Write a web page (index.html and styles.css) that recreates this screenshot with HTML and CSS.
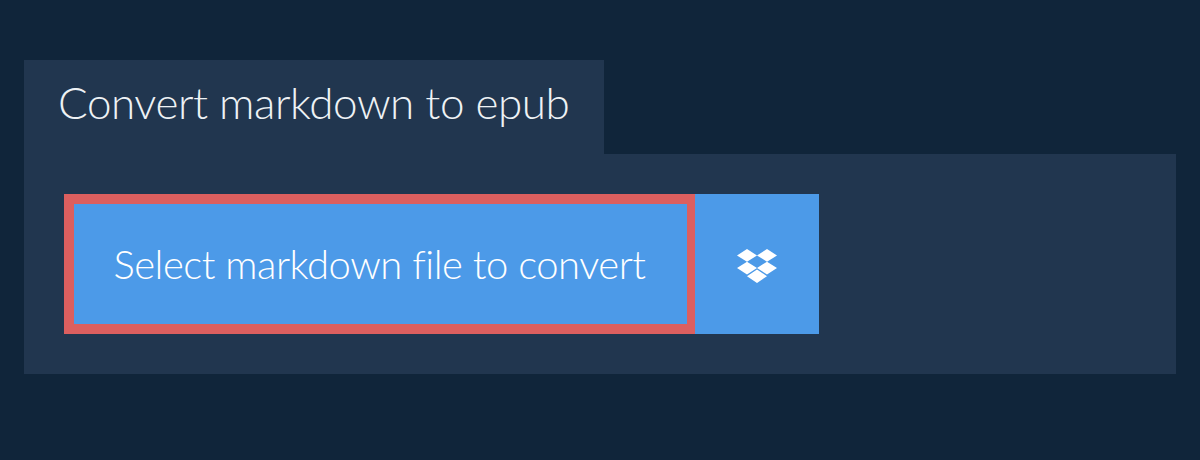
FILE: index.html
```html
<!DOCTYPE html>
<html lang="en">
<head>
  <meta charset="UTF-8" />
  <title>Convert markdown to epub</title>
  <link rel="stylesheet" href="styles.css">
</head>
<body>
  <h1 class="tab">Convert markdown to epub</h1>
  <div class="panel">
    <div class="actions">
      <button class="select-btn" type="button">Select markdown file to convert</button>
      <button class="dropbox-btn" type="button" aria-label="Dropbox">
        <svg class="dropbox-icon" viewBox="0 0 40 34" width="40" height="34">
          <path d="M10 0 20 6.4 10 12.700 0 6.4zM30 0 40 6.4 30 12.700 20 6.4zM0 19 10 12.700 20 19 10 25.400zM30 12.700 40 19 30 25.400 20 19zM20 20.500 30 27.200 20 34 10 27.200z" />
        </svg>
      </button>
    </div>
  </div>
</body>
</html>
```

FILE: styles.css
```css
body {
  margin: 0;
  padding: 60px 24px 0;
  background: #10253a;
  font-family: Lato, sans-serif;
  font-weight: 300;
}
.tab {
  display: table;
  margin: 0;
  padding: 16px 35px 26px 34px;
  background: #21364f;
  color: #eef2f5;
  font-size: 44px;
  font-weight: 300;
  line-height: 52px;
  letter-spacing: -0.45px;
}
.panel {
  background: #21364f;
  padding: 40px;
}
.actions {
  display: flex;
}
.select-btn {
  width: 631px;
  height: 140px;
  box-sizing: border-box;
  border: 10px solid #dc5f5f;
  border-right-width: 8px;
  background: #4c9ae8;
  color: #fff;
  font-family: inherit;
  font-size: 40px;
  font-weight: 300;
  letter-spacing: -0.48px;
  padding: 0 2px 0 0;
}
.dropbox-btn {
  width: 124px;
  height: 140px;
  border: 0;
  padding: 4px 0 0;
  background: #4c9ae8;
  display: flex;
  align-items: center;
  justify-content: center;
}
.dropbox-icon {
  fill: #fff;
}
```
